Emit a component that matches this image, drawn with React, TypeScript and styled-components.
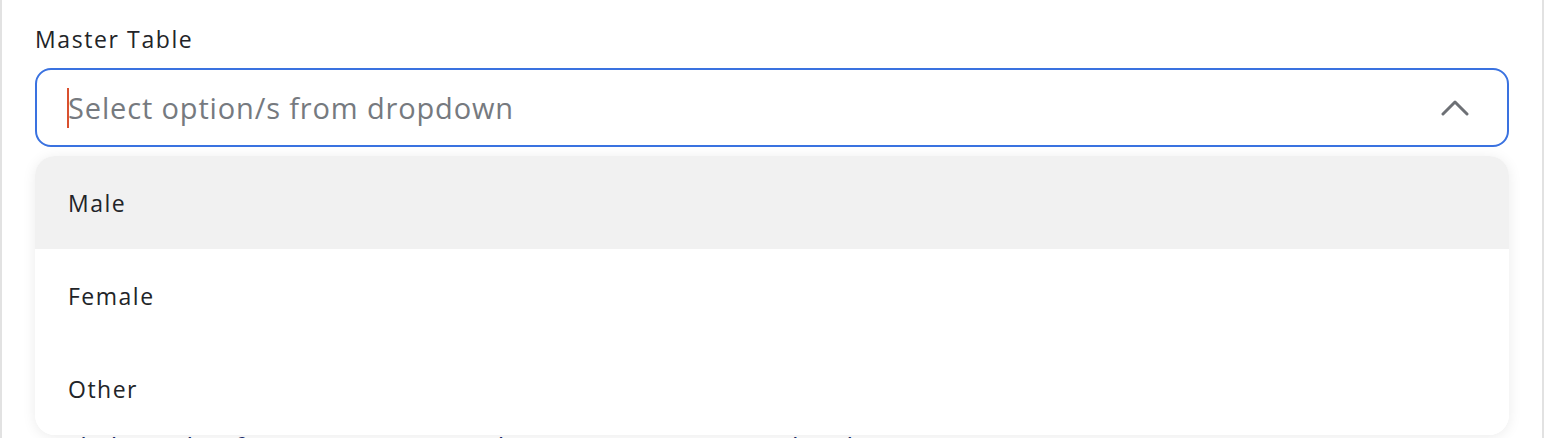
import React from "react";
import styled, { createGlobalStyle } from "styled-components";

const GlobalStyle = createGlobalStyle`
  html, body {
    margin: 0;
    padding: 0;
    background: #ffffff;
  }
  body {
    font-family: "Open Sans", "Liberation Sans", sans-serif;
  }
`;

const Page = styled.div`
  width: 1544px;
  height: 438px;
  overflow: hidden;
  box-sizing: border-box;
  background: #ffffff;
  border-left: 2px solid #e2e2e2;
  border-right: 2px solid #e2e2e2;
`;

const Form = styled.div`
  padding: 24px 33px 0 33px;
  display: flex;
  flex-direction: column;
`;

const Label = styled.label`
  font-size: 23px;
  color: #222428;
  letter-spacing: 1.6px;
  line-height: 30px;
  margin-bottom: 14px;
`;

const Field = styled.div`
  position: relative;
`;

const SelectBox = styled.div`
  height: 79px;
  box-sizing: border-box;
  border: 2px solid #3a72e0;
  border-radius: 16px;
  display: flex;
  align-items: center;
  padding: 0 38px 0 30px;
  background: #fff;
`;

const Caret = styled.span`
  width: 2px;
  height: 40px;
  background: #d9502f;
  margin-right: -1px;
`;

const Placeholder = styled.span`
  flex: 1;
  font-size: 29px;
  color: #767a7f;
  letter-spacing: 0.85px;
`;

const Chevron = styled.svg`
  width: 28px;
  height: 16px;
  color: #6d7075;
`;

const Menu = styled.ul`
  position: absolute;
  left: 0;
  right: 0;
  top: 88px;
  margin: 0;
  padding: 0;
  list-style: none;
  background: #fff;
  border-radius: 20px;
  overflow: hidden;
  box-shadow: 0 2px 14px rgba(0, 0, 0, 0.08);
  z-index: 2;
`;

const Option = styled.li<{ $active?: boolean }>`
  height: 93px;
  display: flex;
  align-items: center;
  padding-left: 33px;
  font-size: 23px;
  letter-spacing: 1.5px;
  color: #222428;
  background: ${(p) => (p.$active ? "#f1f1f1" : "#ffffff")};
`;

const Hint = styled.p`
  margin: 284px 0 0 6px;
  font-size: 26px;
  line-height: 30px;
  color: #1b2f6e;
  display: flex;
  align-items: center;
  gap: 10px;
  white-space: nowrap;
  letter-spacing: 1.6px;
`;

const options = ["Male", "Female", "Other"];

export default function App() {
  return (
    <>
      <GlobalStyle />
      <Page>
        <Form>
          <Label>Master Table</Label>
          <Field>
            <SelectBox>
              <Caret />
              <Placeholder>Select option/s from dropdown</Placeholder>
              <Chevron viewBox="0 0 28 16" fill="none">
                <path
                  d="M2 14 L14 2 L26 14"
                  stroke="currentColor"
                  strokeWidth="3"
                  strokeLinecap="round"
                  strokeLinejoin="round"
                />
              </Chevron>
            </SelectBox>
            <Menu>
              {options.map((o, i) => (
                <Option key={o} $active={i === 0}>
                  {o}
                </Option>
              ))}
            </Menu>
          </Field>
          <Hint>
            <span>{"{"}</span>
            Clicking this form component takes you to an external web page
          </Hint>
        </Form>
      </Page>
    </>
  );
}
